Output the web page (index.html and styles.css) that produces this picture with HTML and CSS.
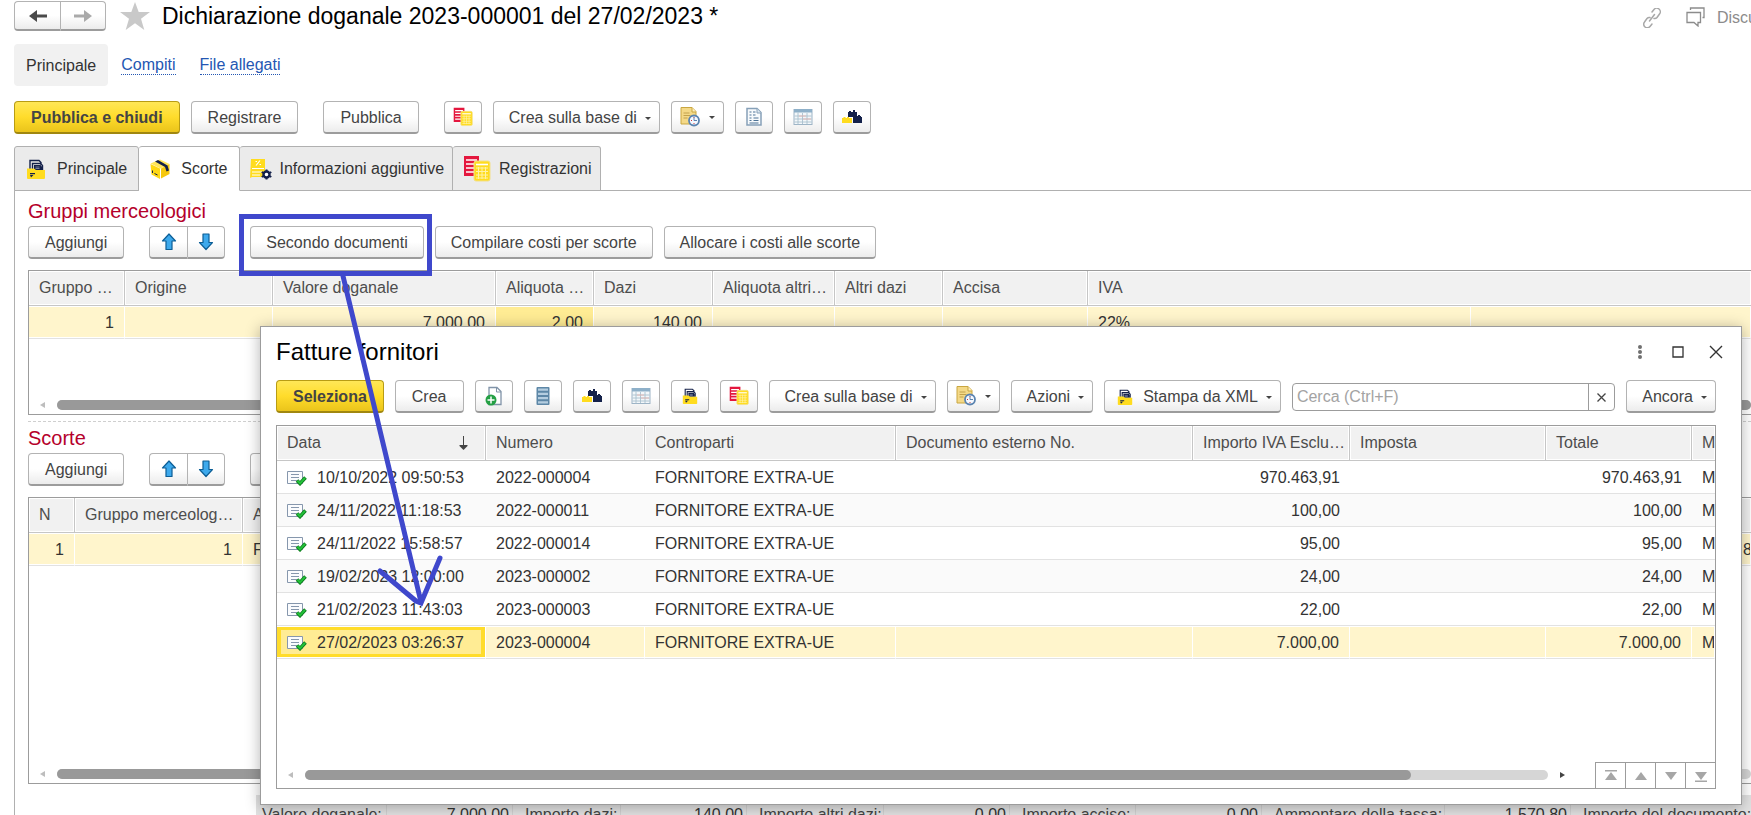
FILE: index.html
```html
<!DOCTYPE html>
<html lang="it">
<head>
<meta charset="utf-8">
<title>Dichiarazione doganale 2023-000001</title>
<link rel="stylesheet" href="styles.css">
</head>
<body>
<svg class="sprite" aria-hidden="true">
  <defs>
    <symbol id="i-reg" viewBox="0 0 28 28">
      <path fill="#e4173e" d="M1 1h15v5h-4v15H1z"/>
      <path stroke="#fff" stroke-width="1.6" d="M3 5h11M3 9h9M3 13h9M3 17h9"/>
      <rect x="11" y="6" width="16" height="20" rx="2" fill="#ffdc1f" stroke="#f3e08a"/>
      <path stroke="#fff" stroke-width="1.6" d="M13 9.5h12"/>
      <path stroke="#fff3a8" stroke-width="1" d="M13 13h12M13 16.500h12M13 20h12M13 23h12M15.500 12v12M19 12v12M22.500 12v12"/>
    </symbol>
    <symbol id="i-folder" viewBox="0 0 20 20">
      <path fill="none" stroke="#14214a" stroke-width="1.400" d="M4 10V1.500h9l2 2V6M6.500 10V4.500h8l2 2V11"/>
      <path fill="#14214a" d="M8 6h6.500l1.500 1.500V11H8z"/>
      <path stroke="#8d96b5" stroke-width=".8" d="M9.500 8h4M9.500 9.500h4"/>
      <path fill="#ffdc1f" d="M1 9.500h7l2 1.500h9V19a1 1 0 0 1-1 1H2a1 1 0 0 1-1-1z"/>
      <path fill="#14214a" d="M4 14h5v1.200H4zM4 16h3.500L5 18.500z"/>
    </symbol>
    <symbol id="i-box" viewBox="0 0 20 20">
      <path fill="#ffe65a" d="M10 .5l9.500 4.500-9 4.500L.5 4.500z"/>
      <path fill="#ffd814" d="M.5 5l9.500 4.500V20L1.500 15.500z"/>
      <path fill="#f6c80e" d="M11 9.500l8.500-4.500V15L11 19.500z"/>
      <path fill="#14214a" d="M5 2.500L8 1l9.500 5.500 1.500 5-2.500 1L15 8z"/>
      <path stroke="#14214a" fill="none" d="M2.500 11.500v2.500M4.500 14.500l3 1.500"/>
    </symbol>
    <symbol id="i-info" viewBox="0 0 22 22">
      <path fill="#ffdc1f" d="M1 1h14v18H2l-2 1z"/>
      <path stroke="#fff" stroke-width="1.200" fill="none" d="M2 10.500h12M2 14h10M2 17h8M6 7.500l4-5M5.500 3.500h1.500M9.500 6.500H11"/>
      <circle cx="16.500" cy="16.500" r="3" fill="#fff" stroke="#14214a" stroke-width="2.400"/>
      <path stroke="#14214a" stroke-width="2" d="M16.500 11.500v2M16.500 19.500v2M11.700 14l1.800 1M19.500 18l1.800 1M11.700 19l1.800-1M19.500 15l1.800-1"/>
    </symbol>
    <symbol id="i-note" viewBox="0 0 20 20">
      <path fill="#f4d987" stroke="#c9a640" d="M1 .500h11l4 4V17H1z"/>
      <path fill="#fff0bd" stroke="#c9a640" d="M12 .500V5h4"/>
      <path stroke="#c2a14c" d="M3.500 6h6M3.500 8.500h7M3.500 11h4"/>
      <circle cx="14" cy="13.500" r="5" fill="#f5f9ff" stroke="#5b84b0" stroke-width="1.800"/>
      <path stroke="#d2363a" d="M14 10v1M17 13.500h-1M14 17v-1M11 13.500h1"/>
      <path stroke="#5b84b0" fill="none" d="M14 10.500v3h3"/>
    </symbol>
    <symbol id="i-report" viewBox="0 0 18 20">
      <path fill="#f7fafc" stroke="#86a0b8" stroke-width="1.500" d="M2 1.500h10l4 4V18H2z"/>
      <path fill="#dce7f0" stroke="#86a0b8" d="M12 1.500V6h4"/>
      <path stroke="#4e7396" stroke-width="1.200" d="M4.500 5h2M8 5h2.500M4.500 8h2M8 8h2.500M4.500 11h2M8.500 11h5M8.500 13.500h5M4.500 13.500h2M4.500 16h9"/>
    </symbol>
    <symbol id="i-grid" viewBox="0 0 20 18">
      <rect x="1" y="1.500" width="18" height="15" fill="#f3f7fa" stroke="#9db4c6"/>
      <path fill="#8eb0c9" d="M1 1h18v3.500H1z"/>
      <path stroke="#a9bfce" stroke-width=".9" d="M1.500 8h17M1.500 11h17M1.500 14h17M5 4.500v12M9.500 5v11M14 5v11"/>
      <path stroke="#eeb3ab" stroke-width=".8" d="M6 8h7M10 11h8"/>
    </symbol>
    <symbol id="i-lego" viewBox="0 0 20 14">
      <path fill="#14214a" d="M6 7V2h1V1h2v1h2V0h2v2h2v4h1V5h2v1h1v1h1v6h-9V7z"/>
      <path fill="#ffdc1f" d="M0 13V8h1.500V7h2v1H5V7h2v1h3v5z"/>
    </symbol>
    <symbol id="i-rows" viewBox="0 0 14 20">
      <rect x=".5" y="1" width="13" height="18" rx="1" fill="#5d87a7"/>
      <path stroke="#b4cde0" stroke-width="2.200" d="M2 3.700h10M2 7.900h10M2 12.100h10M2 16.300h10"/>
    </symbol>
    <symbol id="i-new" viewBox="0 0 18 20">
      <path fill="#fff" stroke="#8093a8" stroke-width="1.300" d="M4 1.500h8l4 4V18.500H4z"/>
      <path fill="none" stroke="#8093a8" d="M11.500 1.500V6H16"/>
      <circle cx="6" cy="14" r="5.500" fill="#25a045"/>
      <path stroke="#fff" stroke-width="1.500" d="M6 10.500v7M2.500 14h7"/>
    </symbol>
    <symbol id="i-up" viewBox="0 0 16 18">
      <path fill="#3da9ec" stroke="#0c5e96" stroke-width="1.200" stroke-linejoin="round" d="M8 1l6.500 7H11v8.500H5V8H1.500z"/>
    </symbol>
    <symbol id="i-down" viewBox="0 0 16 18">
      <path fill="#3da9ec" stroke="#0c5e96" stroke-width="1.200" stroke-linejoin="round" d="M8 16.500L1.500 9.500H5V1h6v8.500h3.500z"/>
    </symbol>
    <symbol id="i-posted" viewBox="0 0 20 16">
      <path fill="#fbfcfe" stroke="#8697ad" d="M.5 1.500h15v12H.5z"/>
      <path stroke="#8697ad" d="M4 4.500h8M4 7.500h8M4 10.500h6"/>
      <path fill="none" stroke="#0d7c1d" stroke-width="3.600" d="M10 10.500l3 3 5.500-6"/>
      <path fill="none" stroke="#23c23a" stroke-width="2" d="M10.500 10.800l2.500 2.500 5-5.500"/>
    </symbol>
  </defs>
</svg>

<main class="page">
  <header class="top">
    <div class="split">
      <button class="btn nav" aria-label="Indietro"><svg width="18" height="14" viewBox="0 0 18 14"><path fill="#4a4a4a" d="M0 7l8-6v4.500h10v3H8V13z"/></svg></button>
      <button class="btn nav" aria-label="Avanti"><svg width="18" height="14" viewBox="0 0 18 14"><path fill="#aaa" d="M18 7l-8-6v4.500H0v3h10V13z"/></svg></button>
    </div>
    <svg class="star" width="30" height="28" viewBox="0 0 30 28"><path fill="#c9c9c9" d="M15 0l3.700 10H30l-9 6.700L24.300 28 15 21.300 5.700 28 9 16.700 0 10h11.300z"/></svg>
    <h1 class="title">Dichiarazione doganale 2023-000001 del 27/02/2023 *</h1>
    <svg class="link-icon" width="18" height="20" viewBox="0 0 18 20"><path fill="none" stroke="#a8a8a8" stroke-width="1.500" stroke-linecap="round" d="M9 4l2-2.500a3.500 3.500 0 0 1 5.500 4.500L14 9.500a3 3 0 0 1-3 1M9 16l-2 2.500a3.500 3.500 0 0 1-5.500-4.500L4 10.500a3 3 0 0 1 3-1M6.500 13l5-6.500"/></svg>
    <svg class="chat-icon" width="19" height="20" viewBox="0 0 19 20"><path fill="none" stroke="#8c8c8c" stroke-width="1.300" d="M1 5.500h13.500v10H12V19L8 15.500H1zM4.500 3V1H18v9.500h-1.500"/></svg>
    <span class="discuss">Discussioni</span>
  </header>

  <nav class="sections">
    <a class="section-on" href="#principale">Principale</a>
    <a class="section-link" href="#compiti">Compiti</a>
    <a class="section-link" href="#file">File allegati</a>
  </nav>

  <div class="bar">
    <button class="btn primary">Pubblica e chiudi</button>
    <button class="btn">Registrare</button>
    <button class="btn apart">Pubblica</button>
    <button class="btn icon apart" aria-label="Registrazioni"><svg width="20" height="20"><use href="#i-reg"/></svg></button>
    <button class="btn drop">Crea sulla base di<i class="caret"></i></button>
    <button class="btn icon-drop" aria-label="Promemoria"><svg width="20" height="20"><use href="#i-note"/></svg><i class="caret"></i></button>
    <button class="btn icon" aria-label="Rapporto"><svg width="18" height="20"><use href="#i-report"/></svg></button>
    <button class="btn icon" aria-label="Elenco"><svg width="20" height="18"><use href="#i-grid"/></svg></button>
    <button class="btn icon" aria-label="Componenti"><svg width="20" height="14"><use href="#i-lego"/></svg></button>
  </div>

  <div class="tabs" role="tablist">
    <button class="tab" role="tab"><svg width="20" height="20"><use href="#i-folder"/></svg>Principale</button>
    <button class="tab on" role="tab" aria-selected="true"><svg width="20" height="20"><use href="#i-box"/></svg>Scorte</button>
    <button class="tab snug" role="tab"><svg width="22" height="22"><use href="#i-info"/></svg>Informazioni aggiuntive</button>
    <button class="tab snug" role="tab"><svg width="28" height="28"><use href="#i-reg"/></svg>Registrazioni</button>
  </div>

  <div class="panel">
    <section>
      <h2 class="group">Gruppi merceologici</h2>
      <div class="bar">
        <button class="btn">Aggiungi</button>
        <div class="split apart">
          <button class="btn icon" aria-label="Sposta su"><svg width="16" height="18"><use href="#i-up"/></svg></button>
          <button class="btn icon" aria-label="Sposta giù"><svg width="16" height="18"><use href="#i-down"/></svg></button>
        </div>
        <button class="btn long apart">Secondo documenti</button>
        <button class="btn long">Compilare costi per scorte</button>
        <button class="btn long">Allocare i costi alle scorte</button>
      </div>
      <div class="frame frame-groups">
        <table class="grid groups">
          <colgroup><col class="g1"><col class="g2"><col class="g3"><col class="g4"><col class="g5"><col class="g6"><col class="g7"><col class="g8"><col class="g9"><col></colgroup>
          <thead><tr><th>Gruppo merceologico</th><th>Origine</th><th>Valore doganale</th><th>Aliquota dazi</th><th>Dazi</th><th>Aliquota altri dazi</th><th>Altri dazi</th><th>Accisa</th><th colspan="2">IVA</th></tr></thead>
          <tbody><tr class="sel"><td class="num">1</td><td></td><td class="num">7.000,00</td><td class="num cur">2,00</td><td class="num">140,00</td><td></td><td></td><td></td><td>22%</td><td></td></tr></tbody>
        </table>
        <div class="scroll"><i class="arrow-left"></i><div class="track"><div class="thumb whole"></div></div></div>
      </div>
    </section>
    <hr class="splitter">
    <section>
      <h2 class="group">Scorte</h2>
      <div class="bar">
        <button class="btn">Aggiungi</button>
        <div class="split apart">
          <button class="btn icon" aria-label="Sposta su"><svg width="16" height="18"><use href="#i-up"/></svg></button>
          <button class="btn icon" aria-label="Sposta giù"><svg width="16" height="18"><use href="#i-down"/></svg></button>
        </div>
        <button class="btn icon apart" aria-label="Altro"></button>
      </div>
      <div class="frame frame-stock">
        <table class="grid stock">
          <colgroup><col class="s1"><col class="s2"><col><col class="s4"></colgroup>
          <thead><tr><th>N</th><th>Gruppo merceologico</th><th>A</th><th></th></tr></thead>
          <tbody><tr class="sel"><td class="num">1</td><td class="num">1</td><td>F</td><td class="edge">8</td></tr></tbody>
        </table>
        <div class="scroll"><i class="arrow-left"></i><div class="track"><div class="thumb part"></div></div></div>
      </div>
    </section>
    <footer class="totals">
      <span class="t1">Valore doganale:</span><span class="val">7.000,00</span>
      <span class="t2">Importo dazi:</span><span class="val">140,00</span>
      <span class="t3">Importo altri dazi:</span><span class="val">0,00</span>
      <span class="t4">Importo accise:</span><span class="val">0,00</span>
      <span class="t5">Ammontare della tassa:</span><span class="val">1.570,80</span>
      <span class="t6">Importo del documento:</span>
    </footer>
  </div>
</main>

<div class="dialog" role="dialog" aria-labelledby="dlg-title">
  <header class="dialog-head">
    <h2 class="title" id="dlg-title">Fatture fornitori</h2>
    <button class="plain" aria-label="Menu"><svg width="14" height="16" viewBox="0 0 14 16"><g fill="#707070"><circle cx="7" cy="3" r="2"/><circle cx="7" cy="8" r="2"/><circle cx="7" cy="13" r="2"/></g></svg></button>
    <button class="plain" aria-label="Ingrandisci"><svg width="14" height="14" viewBox="0 0 14 14"><path fill="none" stroke="#333" stroke-width="1.300" d="M2 2h10v10H2z"/></svg></button>
    <button class="plain" aria-label="Chiudi"><svg width="14" height="14" viewBox="0 0 14 14"><path stroke="#333" stroke-width="1.400" d="M1 1l12 12M13 1L1 13"/></svg></button>
  </header>
  <div class="bar">
    <button class="btn primary">Seleziona</button>
    <button class="btn">Crea</button>
    <button class="btn icon" aria-label="Nuovo"><svg width="18" height="20"><use href="#i-new"/></svg></button>
    <button class="btn icon" aria-label="Righe"><svg width="14" height="20"><use href="#i-rows"/></svg></button>
    <button class="btn icon" aria-label="Componenti"><svg width="20" height="14"><use href="#i-lego"/></svg></button>
    <button class="btn icon" aria-label="Elenco"><svg width="20" height="18"><use href="#i-grid"/></svg></button>
    <button class="btn icon" aria-label="Documenti"><svg width="16" height="16"><use href="#i-folder"/></svg></button>
    <button class="btn icon" aria-label="Registrazioni"><svg width="20" height="20"><use href="#i-reg"/></svg></button>
    <button class="btn drop">Crea sulla base di<i class="caret"></i></button>
    <button class="btn icon-drop" aria-label="Promemoria"><svg width="20" height="20"><use href="#i-note"/></svg><i class="caret"></i></button>
    <button class="btn drop">Azioni<i class="caret"></i></button>
    <button class="btn drop with-icon"><svg width="16" height="16"><use href="#i-folder"/></svg>Stampa da XML<i class="caret"></i></button>
    <div class="search">
      <input type="text" placeholder="Cerca (Ctrl+F)" aria-label="Cerca">
      <button class="clear" aria-label="Cancella"><svg width="9" height="9" viewBox="0 0 9 9"><path stroke="#444" stroke-width="1.300" d="M.5 .5l8 8M8.500 .5l-8 8"/></svg></button>
    </div>
    <button class="btn drop">Ancora<i class="caret"></i></button>
  </div>
  <div class="frame frame-dialog">
    <table class="grid invoices">
      <colgroup><col class="d1"><col class="d2"><col class="d3"><col><col class="d5"><col class="d6"><col class="d7"><col class="d8"></colgroup>
      <thead><tr><th><span class="sorted">Data<svg width="9" height="14" viewBox="0 0 9 14"><path fill="#444" d="M4 0h1v9h3.500v1l-4 4-4-4V9H4z"/></svg></span></th><th>Numero</th><th>Controparti</th><th>Documento esterno No.</th><th>Importo IVA Esclusa</th><th>Imposta</th><th>Totale</th><th class="cut">M</th></tr></thead>
      <tbody>
        <tr><td><span class="doc"><svg width="20" height="16"><use href="#i-posted"/></svg>10/10/2022 09:50:53</span></td><td>2022-000004</td><td>FORNITORE EXTRA-UE</td><td></td><td class="num">970.463,91</td><td></td><td class="num">970.463,91</td><td class="cut">M</td></tr>
        <tr><td><span class="doc"><svg width="20" height="16"><use href="#i-posted"/></svg>24/11/2022 11:18:53</span></td><td>2022-000011</td><td>FORNITORE EXTRA-UE</td><td></td><td class="num">100,00</td><td></td><td class="num">100,00</td><td class="cut">M</td></tr>
        <tr><td><span class="doc"><svg width="20" height="16"><use href="#i-posted"/></svg>24/11/2022 15:58:57</span></td><td>2022-000014</td><td>FORNITORE EXTRA-UE</td><td></td><td class="num">95,00</td><td></td><td class="num">95,00</td><td class="cut">M</td></tr>
        <tr><td><span class="doc"><svg width="20" height="16"><use href="#i-posted"/></svg>19/02/2023 12:00:00</span></td><td>2023-000002</td><td>FORNITORE EXTRA-UE</td><td></td><td class="num">24,00</td><td></td><td class="num">24,00</td><td class="cut">M</td></tr>
        <tr><td><span class="doc"><svg width="20" height="16"><use href="#i-posted"/></svg>21/02/2023 11:43:03</span></td><td>2023-000003</td><td>FORNITORE EXTRA-UE</td><td></td><td class="num">22,00</td><td></td><td class="num">22,00</td><td class="cut">M</td></tr>
        <tr class="sel"><td class="focus"><span class="doc"><svg width="20" height="16"><use href="#i-posted"/></svg>27/02/2023 03:26:37</span></td><td>2023-000004</td><td>FORNITORE EXTRA-UE</td><td></td><td class="num">7.000,00</td><td></td><td class="num">7.000,00</td><td class="cut">M</td></tr>
      </tbody>
    </table>
    <div class="foot">
      <div class="scroll"><i class="arrow-left"></i><div class="track"><div class="thumb most"></div></div><i class="arrow-right"></i></div>
      <div class="pager">
        <button aria-label="Inizio"><svg width="14" height="12" viewBox="0 0 14 12"><path fill="#a6a6a6" d="M1 0h12v1.500H1zM7 2l6 8H1z"/></svg></button>
        <button aria-label="Su"><svg width="14" height="12" viewBox="0 0 14 12"><path fill="#a6a6a6" d="M7 2l6 8H1z"/></svg></button>
        <button aria-label="Giù"><svg width="14" height="12" viewBox="0 0 14 12"><path fill="#a6a6a6" d="M7 10l6-8H1z"/></svg></button>
        <button aria-label="Fine"><svg width="14" height="12" viewBox="0 0 14 12"><path fill="#a6a6a6" d="M7 10l6-8H1zM1 10.500h12V12H1z"/></svg></button>
      </div>
    </div>
  </div>
</div>

<svg class="marks" aria-hidden="true">
  <g fill="none" stroke="#3f48cc" stroke-width="5">
    <rect x="241.500" y="216.500" width="188" height="57"/>
    <path stroke-linecap="round" d="M343 276L421 602M380 571l36 30 5 2 19-45"/>
  </g>
</svg>
</body>
</html>
```

FILE: styles.css
```css
* { box-sizing: border-box; }

html { height: 100%; overflow: hidden; }

body {
  margin: 0;
  height: 100%;
  overflow: hidden;
  position: relative;
  background: #fff;
  color: #333;
  font: 16px/20px "Liberation Sans", Arial, sans-serif;
}

button, input { font: inherit; color: inherit; }
svg { display: block; flex: none; }
.sprite { position: absolute; width: 0; height: 0; }

/* Page header */
.page { padding: 1px 0 0 14px; }
.top { display: flex; align-items: center; height: 30px; white-space: nowrap; }
.star { margin: 0 12px 0 14px; }
.title { margin: 0; font-size: 23px; line-height: 28px; font-weight: 400; color: #000; }
.link-icon { margin: 3px 0 0 auto; }
.chat-icon { margin: 2px 12px 0 25px; }
.discuss { width: 34px; padding-top: 3px; overflow: hidden; color: #8c8c8c; }

.sections { display: flex; align-items: center; gap: 24px; height: 42px; margin: 13px 0 15px; }
.section-on { padding: 12px 12px 10px; margin-right: -11px; border-radius: 4px; background: #f1f1f1; color: #333; text-decoration: none; }
.section-link { line-height: 18px; margin-top: 1px; color: #2457b3; text-decoration: none; border-bottom: 1px dotted #2457b3; }

/* Buttons */
.bar { display: flex; gap: 11px; height: 33px; }
.apart { margin-left: 14px; }
.btn {
  display: flex;
  align-items: center;
  justify-content: center;
  flex: none;
  height: 33px;
  padding: 2px 16px 0;
  border: 1px solid #b3b3b3;
  border-bottom: 2px solid #9c9c9c;
  border-radius: 4px;
  background: linear-gradient(#fff 50%, #ececec);
  color: #444;
  white-space: nowrap;
}
.primary {
  border-color: #b89c14;
  border-bottom-color: #a08710;
  background: linear-gradient(#ffe757, #ffdc2b 50%, #eac41b);
  font-weight: 700;
}
.long { padding: 2px 15px 0; }
.icon { width: 38px; padding: 0; }
.drop { padding: 2px 8px 0 15px; gap: 8px; }
.icon-drop { width: 53px; padding: 0; gap: 9px; }
.with-icon { padding-left: 12px; }
.with-icon svg { margin-right: 2px; }
.caret { border: 3px solid transparent; border-top: 3px solid #444; border-bottom: 0; }
.split { display: flex; }
.split .btn:first-child { border-radius: 4px 0 0 4px; border-right: 0; }
.split .btn:last-child { border-radius: 0 4px 4px 0; }
.nav { width: 46px; height: 30px; padding: 0; }

/* Tabs */
.tabs { display: flex; margin: 12px 0 -1px; position: relative; }
.tab {
  display: flex;
  align-items: center;
  gap: 11px;
  height: 45px;
  padding: 0 11px;
  border: 1px solid #b0b0b0;
  border-left-width: 0;
  border-radius: 3px 3px 0 0;
  background: #ebebeb;
  white-space: nowrap;
}
.tab:first-child { border-left-width: 1px; }
.tab.on { background: #fff; border-bottom-color: #fff; }
.tab.snug { gap: 8px; padding: 0 8px 0 10px; }
.panel { border: solid #b0b0b0; border-width: 1px 0 0 1px; padding: 8px 0 0 13px; }
.group { margin: 0 0 3px; font-size: 20px; line-height: 24px; font-weight: 400; color: #b5002b; }
.splitter { margin: 6px 0 4px; border: 0; border-top: 1px dashed #cfcfcf; }

/* Table frames */
.frame { display: flex; flex-direction: column; justify-content: space-between; margin-top: 11px; border: 1px solid #9c9c9c; border-right: 0; background: #fff; overflow: hidden; }
.frame-groups { min-height: 145px; }
.frame-stock { min-height: 287px; }
.grid { width: 100%; table-layout: fixed; border-collapse: separate; border-spacing: 0; }
.grid th, .grid td { padding: 0 10px; overflow: hidden; white-space: nowrap; text-overflow: ellipsis; text-align: left; font-weight: 400; }
.grid th { height: 35px; padding-right: 4px; border: solid #c6c6c6; border-width: 0 1px 1px 0; box-shadow: inset 0 0 0 1px #fff; background: #f1f1f1; color: #4d4d4d; }
.grid td { height: 33px; padding-top: 2px; border-bottom: 1px solid #e2e2e2; }
.grid .num { text-align: right; }
.grid .sel td { border-right: 1px solid #fff; background: #fff5cc; box-shadow: inset 0 1px #fff, inset 0 -1px #fff; }
.grid .sel .cur { background: #ffec94; }
.grid .sel .focus { background: #ffec94; box-shadow: inset 0 1px #fff, inset 0 -1px #fff, inset 0 0 0 4px #ffdc2b; }
.grid .edge { padding: 2px 2px 0; text-overflow: clip; }
.grid .cut { padding-right: 0; border-right: 0; text-overflow: clip; }
.groups th:last-child, .stock th:last-child { border-right: 0; }
.stock th:nth-child(2) { padding-right: 7px; }

.g1 { width: 96px; } .g2 { width: 148px; } .g3 { width: 223px; } .g4 { width: 98px; } .g5 { width: 119px; }
.g6 { width: 122px; } .g7 { width: 108px; } .g8 { width: 145px; } .g9 { width: 383px; }
.s1 { width: 46px; } .s2 { width: 168px; } .s4 { width: 10px; }
.d1 { width: 209px; } .d2 { width: 159px; } .d3 { width: 251px; } .d5 { width: 157px; }
.d6 { width: 196px; } .d7 { width: 146px; } .d8 { width: 23px; }

/* Scroll bars */
.scroll { display: flex; align-items: center; flex: 1; max-height: 14px; padding: 0 0 4px 11px; }
.arrow-left { border: 3px solid transparent; border-right: 5px solid #bdbdbd; border-left: 0; }
.arrow-right { margin-left: 12px; border: 3px solid transparent; border-left: 5px solid #444; border-right: 0; }
.track { flex: 1; height: 10px; margin-left: 12px; border-radius: 5px; background: #d6d6d6; }
.thumb { height: 10px; border-radius: 5px; background: #999; }
.whole { width: 100%; }
.part { width: 60%; }
.most { width: 89%; }

/* Totals strip */
.totals { display: flex; height: 40px; margin: 11px 0 0 228px; padding: 10px 0 0 6px; background: #e2e2e2; white-space: nowrap; color: #444; }
.totals span { flex: none; border-right: 1px solid #d2d2d2; }
.t1 { width: 125px; }
.totals .val { width: 126px; padding-right: 3px; text-align: right; color: #333; }
.totals .t2, .totals .t3, .totals .t4, .totals .t5, .totals .t6 { padding-left: 12px; }
.t2 { width: 108px; } .t3 { width: 137px; } .t4 { width: 126px; } .t5 { width: 183px; } .t6 { width: 190px; }

/* Invoice picker */
.dialog {
  position: absolute;
  inset: 326px 9px 10px 260px;
  display: flex;
  flex-direction: column;
  padding: 0 25px 15px 15px;
  border: 1px solid #9c9c9c;
  background: #fff;
  box-shadow: 0 2px 14px rgba(0, 0, 0, .3);
}
.dialog-head { display: flex; align-items: center; gap: 24px; height: 53px; margin-right: -7px; padding-bottom: 3px; }
.dialog-head .title { margin-right: auto; font-size: 24px; }
.plain { padding: 0; border: 0; background: none; }
.search { display: flex; flex: 1; height: 28px; margin-top: 3px; border: 1px solid #9c9c9c; border-radius: 4px; background: #fff; }
.search input { flex: 1; min-width: 0; padding: 0 4px; border: 0; background: none; outline: 0; }
.search input::placeholder { color: #a3a3a3; opacity: 1; }
.clear { display: flex; align-items: center; justify-content: center; width: 26px; padding: 0; border: 0; border-left: 1px solid #9c9c9c; background: none; }
.frame-dialog { flex: 1; margin-top: 12px; border-right: 1px solid #9c9c9c; }
.invoices tbody tr:nth-child(even):not(.sel) { background: #fafafa; }
.sorted { display: flex; align-items: center; justify-content: space-between; padding-right: 13px; }
.doc { display: flex; align-items: center; gap: 10px; }
.foot { display: flex; align-items: flex-end; justify-content: space-between; }
.foot .scroll { max-height: 18px; padding: 0 30px 8px 11px; }
.pager { display: flex; border-top: 1px solid #9c9c9c; }
.pager button { display: flex; align-items: center; justify-content: center; width: 30px; height: 25px; padding: 0; border: 0; border-left: 1px solid #9c9c9c; background: #fff; }

/* Hand-drawn highlight and arrow */
.marks { position: absolute; inset: 0; width: 100%; height: 100%; pointer-events: none; }
```
